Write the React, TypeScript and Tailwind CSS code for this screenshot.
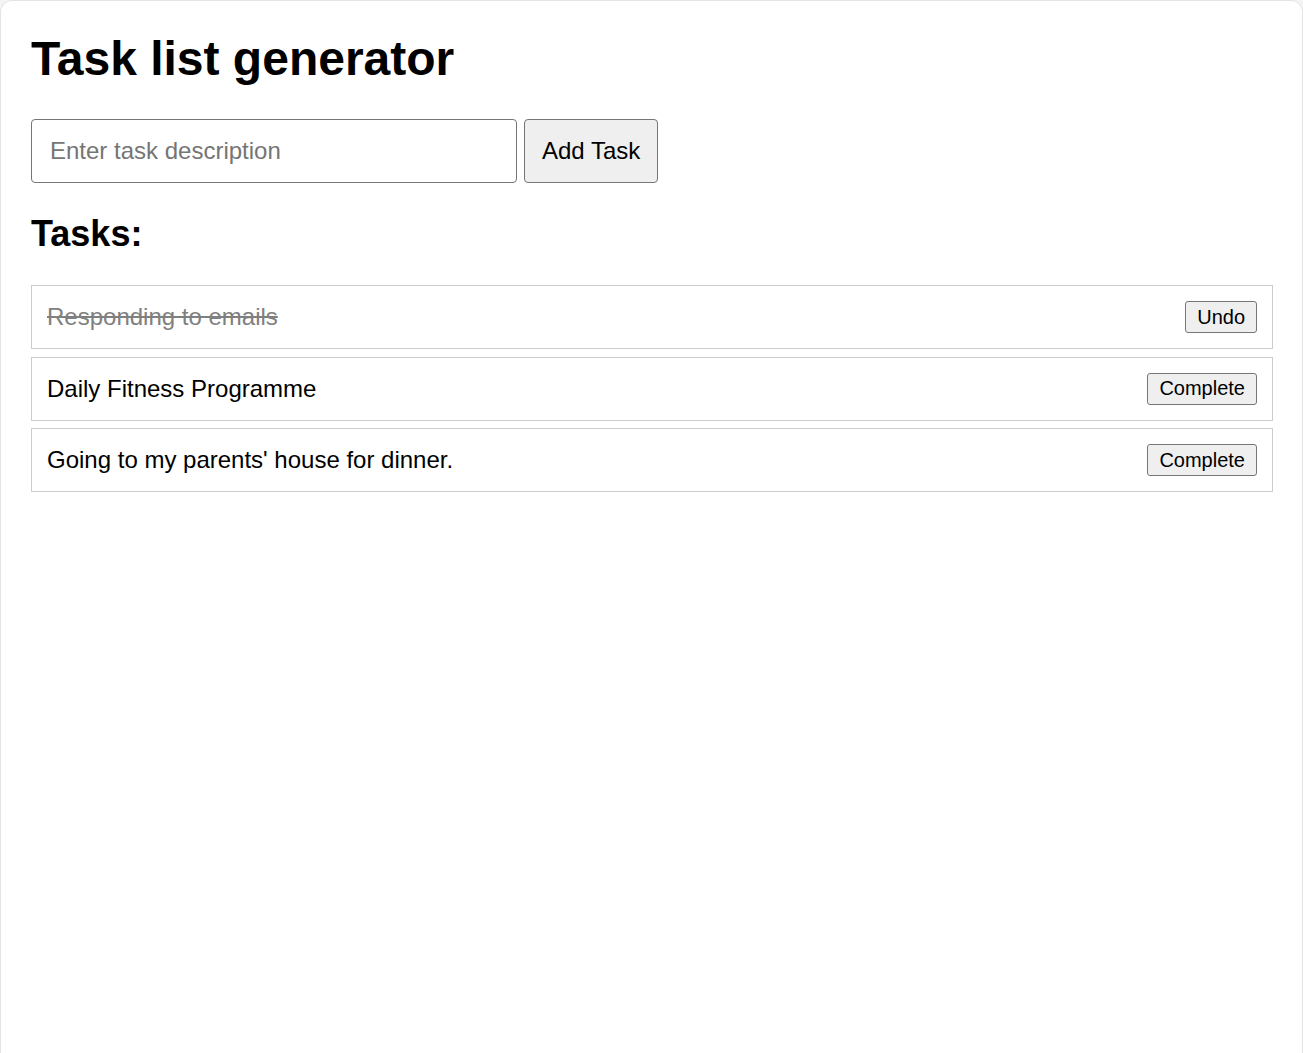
import React from "react";

const tasks = [
  { text: "Responding to emails", done: true },
  { text: "Daily Fitness Programme", done: false },
  { text: "Going to my parents' house for dinner.", done: false },
];

export default function App() {
  return (
    <div
      className="min-h-screen bg-[#f4f4f4]"
      style={{ fontFamily: '"Liberation Sans", Arial, sans-serif' }}
    >
      <div className="min-h-screen bg-white border border-b-0 border-[#e4e4e4] rounded-t-[12px] pt-[30px] pl-[30px] pr-[29px] pb-[30px] text-black">
        <h1 className="text-[48px] leading-[55px] font-bold mb-[33px]">Task list generator</h1>
        <div className="flex items-center gap-[7px]">
          <input
            type="text"
            placeholder="Enter task description"
            className="w-[486px] h-[64px] border border-[#767676] rounded-[4px] px-[18px] text-[24px] placeholder:text-[#757575] outline-none bg-white"
          />
          <button className="h-[64px] px-[17px] border border-[#767676] rounded-[4px] bg-[#efefef] text-[24px] text-black">
            Add Task
          </button>
        </div>
        <h2 className="text-[36px] leading-[41px] font-bold mt-[30px] mb-[31px]">Tasks:</h2>
        <div className="flex flex-col gap-[7.5px]">
          {tasks.map((t) => (
            <div
              key={t.text}
              className="flex items-center justify-between border border-[#cccccc] p-[15px]"
            >
              <span
                className={
                  t.done
                    ? "text-[24px] leading-[28px] line-through text-[#808080]"
                    : "text-[24px] leading-[28px] text-black"
                }
              >
                {t.text}
              </span>
              <button className="h-[32px] px-[11px] border border-[#767676] rounded-[3px] bg-[#efefef] text-[20px] leading-[23px] text-black">
                {t.done ? "Undo" : "Complete"}
              </button>
            </div>
          ))}
        </div>
      </div>
    </div>
  );
}
